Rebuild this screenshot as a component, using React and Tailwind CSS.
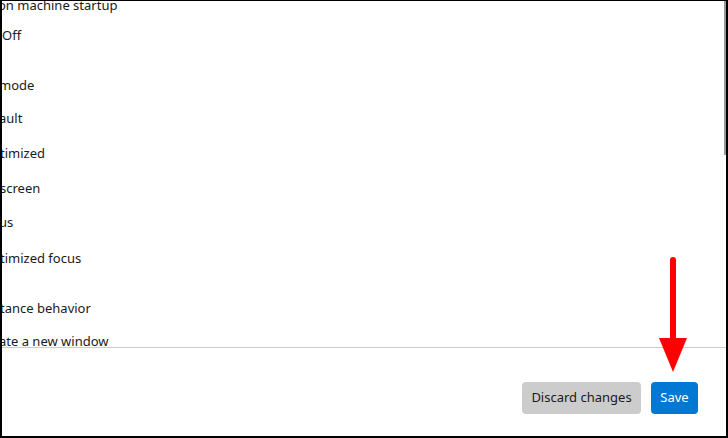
import React from 'react'

// visible rows of the scrolled settings pane: text, gap above, left nudge for the clipped first glyph
const rows = [
    { t: 'on machine startup', mt: '-mt-[6px]', ml: '-ml-[4px]' },
    { t: 'Off', mt: 'mt-[10px]', ml: 'ml-0' },
    { t: 'mode', mt: 'mt-[30px]', ml: '-ml-[3px]' },
    { t: 'ault', mt: 'mt-[13px]', ml: '-ml-[3px]' },
    { t: 'timized', mt: 'mt-[15px]', ml: '-ml-[2px]' },
    { t: 'screen', mt: 'mt-[15px]', ml: '-ml-[2px]' },
    { t: 'us', mt: 'mt-[14px]', ml: '-ml-[3px]' },
    { t: 'timized focus', mt: 'mt-[16px]', ml: '-ml-[2px]' },
    { t: 'tance behavior', mt: 'mt-[30px]', ml: '-ml-[2px]' },
    { t: 'ate a new window', mt: 'mt-[13px]', ml: '-ml-[3px]' },
]

function App() {
    return (
        <div className="w-[728px] h-[438px] bg-white border-t border-l-2 border-r-2 border-b-2 border-black flex flex-col relative overflow-hidden text-[#1a1a1a] font-['Noto_Sans',sans-serif]">

            {/* Scrolled content */}
            <div className="h-[346px] flex overflow-hidden">
                <div className="flex-1 flex flex-col overflow-hidden text-[13px] leading-[20px]">
                    {rows.map(r => (
                        <div key={r.t} className={`${r.mt} whitespace-nowrap`}>
                            <span className={`block ${r.ml}`}>{r.t}</span>
                        </div>
                    ))}
                </div>
                <div className="w-[2px] h-[154px] bg-[#9a9a9a]" />
            </div>

            <div className="h-px bg-[#cccccc]" />

            {/* Footer */}
            <div className="flex-1 flex justify-end items-start gap-[10px] pt-[34px] pr-[28px]">
                <button className="h-[32px] w-[119px] rounded-[4px] bg-[#cccccc] text-[13px] text-[#1a1a1a]">
                    Discard changes
                </button>
                <button className="h-[32px] w-[47px] rounded-[4px] bg-[#0078d4] text-[13px] text-white">
                    Save
                </button>
            </div>

            {/* Red arrow */}
            <svg className="absolute left-[654px] top-[252px]" width="34" height="122" viewBox="0 0 34 122">
                <line x1="17" y1="7" x2="17" y2="88" stroke="#ff0000" strokeWidth="6" strokeLinecap="round" />
                <polygon points="3,85 31,85 17,119" fill="#ff0000" />
            </svg>
        </div>
    )
}

export default App
